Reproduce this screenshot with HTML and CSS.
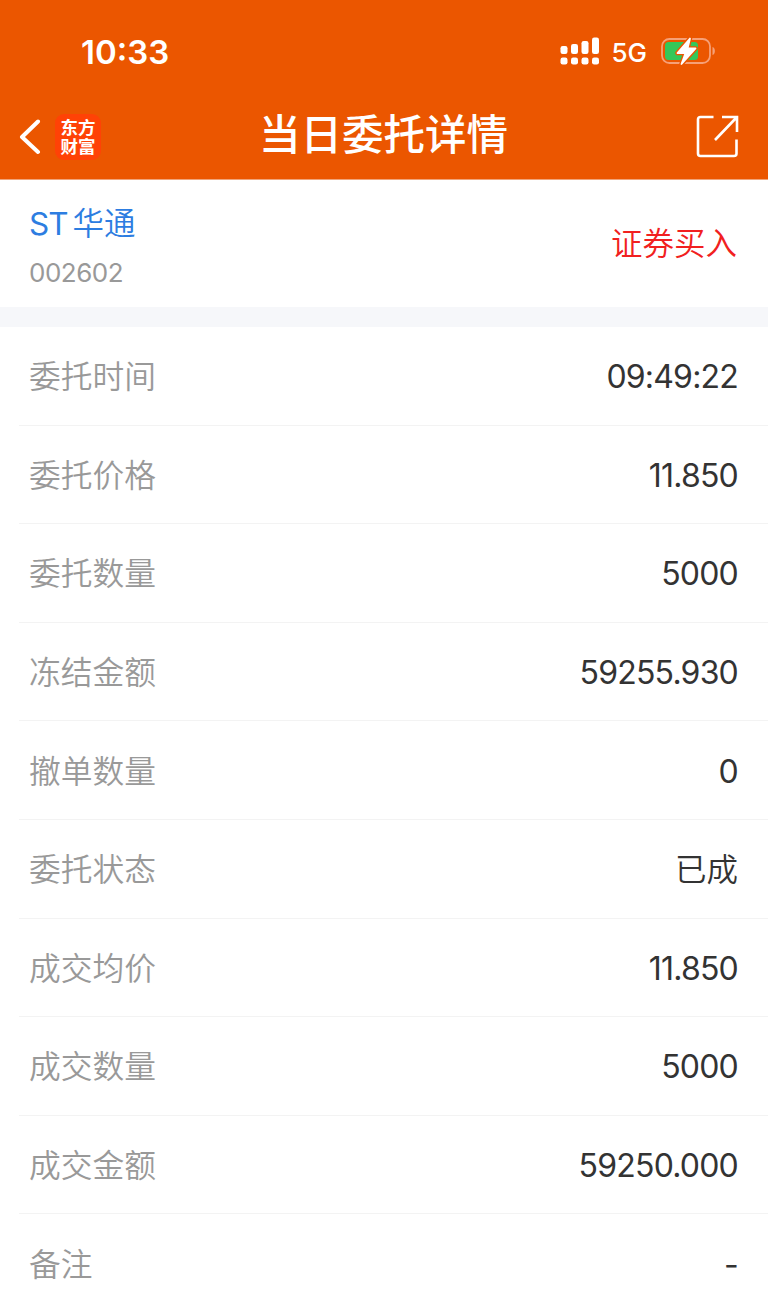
FILE: index.html
```
<!DOCTYPE html>
<html lang="zh-CN">
<head>
    <meta charset="UTF-8">
    <meta name="viewport" content="width=device-width, initial-scale=1.0">
    <title>当日委托详情</title>
    <link rel="stylesheet" href="styles.css">
</head>
<body>
    <header class="header">
        <div class="status-bar">
            <span class="time">10:33</span>
            <div class="status-icons">
                <svg class="signal" width="40" height="28" viewBox="0 0 40 28" fill="#fff">
                    <rect x="0.5" y="9" width="7" height="8" rx="2.2"/>
                    <rect x="11" y="7" width="7" height="10" rx="2.2"/>
                    <rect x="21.5" y="4" width="7" height="13" rx="2.2"/>
                    <rect x="32" y="0.5" width="7" height="16.5" rx="2.2"/>
                    <rect x="0.5" y="20.5" width="7" height="7" rx="2.2"/>
                    <rect x="11" y="20.5" width="7" height="7" rx="2.2"/>
                    <rect x="21.5" y="20.5" width="7" height="7" rx="2.2"/>
                    <rect x="32" y="20.5" width="7" height="7" rx="2.2"/>
                </svg>
                <span class="network">5G</span>
                <svg class="battery" width="56" height="30" viewBox="0 0 56 30">
                    <rect x="1" y="3" width="48" height="24" rx="7.5" fill="none" stroke="#f6a077" stroke-width="1.8"/>
                    <path d="M51.5 11c3.2 1 3.2 7 0 8z" fill="#f6a077"/>
                    <rect x="4" y="6" width="33" height="18" rx="3.5" fill="#34c759"/>
                    <path d="M29 2.500L16.500 17h8l-4 11L34.500 12.500h-8z" fill="#eb5600" stroke="#eb5600" stroke-width="4.500" stroke-linejoin="round"/>
                    <path d="M29 2.500L16.500 17h8l-4 11L34.500 12.500h-8z" fill="#fff" stroke="#fff" stroke-width="1.800" stroke-linejoin="round"/>
                </svg>
            </div>
        </div>
        <div class="nav-bar">
            <div class="nav-left">
                <svg class="back" width="24" height="36" viewBox="0 0 24 36" fill="none" stroke="#fff" stroke-width="4" stroke-linecap="round" stroke-linejoin="round">
                    <path d="M19 2.500L3 18L19 33"/>
                </svg>
                <div class="logo">东方<br>财富</div>
            </div>
            <h1 class="title">当日委托详情</h1>
            <svg class="share" width="44" height="44" viewBox="0 0 44 44" fill="none" stroke="#fff" stroke-width="2.600">
                <path d="M17.500 2H4.500q-2.500 0-2.500 2.500V38.500q0 2.500 2.500 2.500H38q2.500 0 2.500-2.500V24.500"/>
                <path d="M26 2H41V17M40.500 2.500L19 25"/>
            </svg>
        </div>
    </header>

    <section class="stock">
        <div class="stock-info">
            <div class="stock-name"><span class="stock-tag">ST</span>华通</div>
            <div class="stock-code">002602</div>
        </div>
        <div class="direction">证券买入</div>
    </section>

    <ul class="details">
        <li class="row"><span class="label">委托时间</span><span class="value">09:49:22</span></li>
        <li class="row"><span class="label">委托价格</span><span class="value">11.850</span></li>
        <li class="row"><span class="label">委托数量</span><span class="value">5000</span></li>
        <li class="row"><span class="label">冻结金额</span><span class="value">59255.930</span></li>
        <li class="row"><span class="label">撤单数量</span><span class="value">0</span></li>
        <li class="row"><span class="label">委托状态</span><span class="value text">已成</span></li>
        <li class="row"><span class="label">成交均价</span><span class="value">11.850</span></li>
        <li class="row"><span class="label">成交数量</span><span class="value">5000</span></li>
        <li class="row"><span class="label">成交金额</span><span class="value">59250.000</span></li>
        <li class="row"><span class="label">备注</span><span class="value">-</span></li>
    </ul>
</body>
</html>
```
FILE: styles.css
```
* {
    margin: 0;
    padding: 0;
    box-sizing: border-box;
}

body {
    height: 1296px;
    overflow: hidden;
    background: #fff;
    font-family: Inter, "Noto Sans CJK SC", sans-serif;
    color: #333;
}

.header {
    height: 180px;
    background: #eb5600;
    border-bottom: 1px solid #f0a47a;
    color: #fff;
}

.status-bar {
    display: flex;
    justify-content: space-between;
    align-items: center;
    height: 102px;
    padding: 0 51px 0 81px;
}

.time {
    padding-top: 1px;
    font-size: 33px;
    font-weight: 600;
    line-height: 40px;
}

.status-icons {
    display: flex;
    align-items: center;
}

.network {
    margin: 3px 14px 0 11px;
    font-size: 26px;
    font-weight: 500;
    line-height: 32px;
}

.nav-bar {
    display: grid;
    grid-template-columns: 1fr auto 1fr;
    align-items: center;
    height: 70px;
    padding: 0 28px 0 19px;
}

.nav-left {
    display: flex;
    align-items: center;
    gap: 12px;
}

.logo {
    width: 46px;
    height: 46px;
    padding-top: 3px;
    border-radius: 9px;
    background: #ff4206;
    font-family: "Noto Sans CJK SC", sans-serif;
    font-size: 17.5px;
    font-weight: 700;
    line-height: 19px;
    text-align: center;
}

.title {
    padding: 0 0 10px 8px;
    font-family: "Noto Sans CJK SC", sans-serif;
    font-size: 41.5px;
    font-weight: 500;
    line-height: 60px;
}

.share {
    justify-self: end;
}

.stock {
    display: flex;
    justify-content: space-between;
    align-items: center;
    height: 127px;
    padding: 0 31px 0 29px;
}

.stock-name {
    display: flex;
    gap: 5px;
    padding-top: 3px;
    color: #2d7de1;
    font-size: 31.5px;
    font-weight: 350;
    line-height: 48px;
}

.stock-tag {
    font-weight: 400;
    letter-spacing: -1px;
}

.stock-code {
    margin-top: 7px;
    color: #999;
    font-size: 26px;
    line-height: 36px;
    letter-spacing: -0.5px;
}

.direction {
    color: #f12020;
    font-size: 31.5px;
    font-weight: 350;
    line-height: 48px;
}

.details {
    list-style: none;
    border-top: 20px solid #f6f7fa;
}

.row {
    display: flex;
    justify-content: space-between;
    align-items: center;
    height: 98.6px;
    margin-left: 19px;
    padding: 3px 30px 0 10px;
    border-bottom: 1px solid #f3f3f3;
}

.row:last-child {
    border-bottom: none;
}

.label {
    color: #999;
    font-size: 31.75px;
    font-weight: 350;
    line-height: 48px;
}

.value {
    font-size: 32px;
    line-height: 48px;
    letter-spacing: -0.8px;
}

.value.text {
    font-size: 31.5px;
    font-weight: 350;
    letter-spacing: 0;
}
```
